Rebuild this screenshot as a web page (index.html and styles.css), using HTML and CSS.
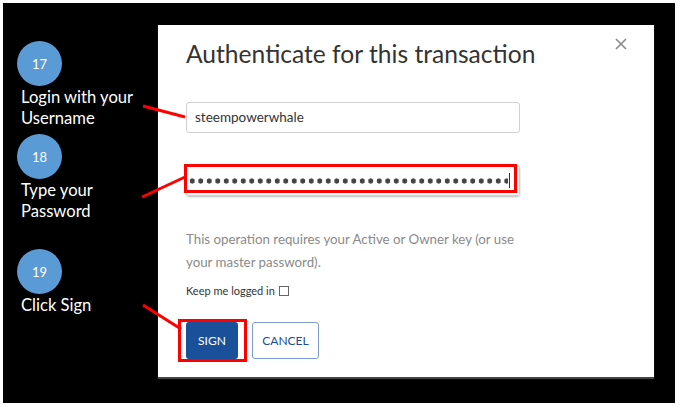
FILE: index.html
```html
<!DOCTYPE html>
<html>
<head>
<meta charset="utf-8">
<link rel="stylesheet" href="styles.css">
</head>
<body>
<div class="frame">
  <div class="steps">
    <div class="step">
      <div class="badge">17</div>
      <div class="label">Login with your<br>Username</div>
    </div>
    <div class="step">
      <div class="badge">18</div>
      <div class="label">Type your<br>Password</div>
    </div>
    <div class="step step-last">
      <div class="badge">19</div>
      <div class="label">Click Sign</div>
    </div>
  </div>
  <div class="modal">
    <div class="modal-head">
      <h1 class="title">Authenticate for this transaction</h1>
      <svg class="close" width="12" height="12" viewBox="0 0 12 12"><path d="M1 1L11 11M11 1L1 11" stroke="#8a8a8a" stroke-width="1.6" fill="none"/></svg>
    </div>
    <div class="field">steempowerwhale</div>
    <div class="field field-pass" aria-label="password"><span class="dots"></span><span class="caret"></span></div>
    <p class="note">This operation requires your Active or Owner key (or use your master password).</p>
    <div class="keep">Keep me logged in <span class="check"></span></div>
    <div class="actions">
      <button class="btn btn-sign">SIGN</button>
      <button class="btn btn-cancel">CANCEL</button>
    </div>
  </div>
  <svg class="marks" width="672" height="400" viewBox="3 3 672 400">
    <g stroke="#ff0000" stroke-width="3" fill="none">
      <line x1="143" y1="106" x2="185" y2="117"/>
      <line x1="142" y1="197" x2="185" y2="177"/>
      <line x1="143" y1="305" x2="181" y2="329"/>
      <rect x="185.5" y="165.5" width="330" height="26"/>
      <rect x="179.5" y="320.5" width="66" height="40"/>
    </g>
  </svg>
</div>
</body>
</html>
```
FILE: styles.css
```css
* { box-sizing: border-box; }
html, body { margin: 0; padding: 0; background: #ffffff; }
body { font-family: Lato, "Open Sans", sans-serif; }
.frame {
  position: relative;
  margin: 3px;
  width: 672px;
  height: 400px;
  background: #000;
  display: flex;
  align-items: flex-start;
}
.steps {
  width: 155px;
  padding: 38px 0 0 14px;
  display: flex;
  flex-direction: column;
  gap: 5px;
}
.step-last { margin-top: 22px; }
.badge {
  width: 45px;
  height: 45px;
  border-radius: 50%;
  background: #5b9bd5;
  color: #fff;
  font-size: 13px;
  display: flex;
  align-items: center;
  justify-content: center;
}
.label {
  color: #fff;
  font-size: 16.6px;
  line-height: 21px;
  margin-left: 4px;
  margin-top: 1px;
}
.modal {
  margin-top: 22px;
  width: 496px;
  height: 352px;
  background: #fff;
  padding: 13px 27px 0 28px;
  box-shadow: 0 2px 1px #444;
}
.modal-head {
  display: flex;
  justify-content: space-between;
  align-items: flex-start;
}
.title {
  margin: 0;
  font-weight: 400;
  font-size: 24.6px;
  line-height: 32px;
  color: #333;
}
.field {
  margin-top: 32px;
  width: 334px;
  height: 31px;
  border: 1px solid #d0d0d0;
  border-radius: 3px;
  padding: 0 8px;
  font-size: 13.5px;
  line-height: 29px;
  color: #333;
  display: flex;
  align-items: center;
}
.field-pass {
  margin-top: 32px;
  padding: 0 0 0 2px;
  overflow: hidden;
  box-shadow: 0 1px 2px #bbb;
}
.dots {
  width: 319px;
  height: 6px;
  background-image: radial-gradient(circle at 50% 50%, #444 2.3px, transparent 2.9px);
  background-size: 8.5px 6px;
  background-position: -1px 0;
}
.caret {
  width: 1px;
  height: 15px;
  background: #333;
  margin-left: 1px;
}
.note {
  margin: 32px 0 0;
  width: 340px;
  font-size: 13.3px;
  line-height: 23px;
  color: #8a8a8a;
}
.keep {
  margin-top: 9px;
  font-size: 11px;
  line-height: 16px;
  color: #333;
  display: flex;
  align-items: center;
}
.check {
  display: inline-block;
  width: 10px;
  height: 10px;
  border: 1px solid #666;
  margin-left: 4px;
}
.actions {
  margin-top: 23px;
  display: flex;
  gap: 14px;
}
.btn {
  height: 37px;
  border-radius: 3px;
  font-family: Lato, "Open Sans", sans-serif;
  font-size: 12px;
  padding: 0;
}
.btn-sign {
  width: 52px;
  background: #1a4f99;
  color: #fff;
  border: none;
}
.btn-cancel {
  width: 67px;
  background: #fff;
  color: #1a4f99;
  border: 1px solid #7d9bd0;
}
.marks {
  position: absolute;
  left: 0;
  top: 0;
  pointer-events: none;
}
```
